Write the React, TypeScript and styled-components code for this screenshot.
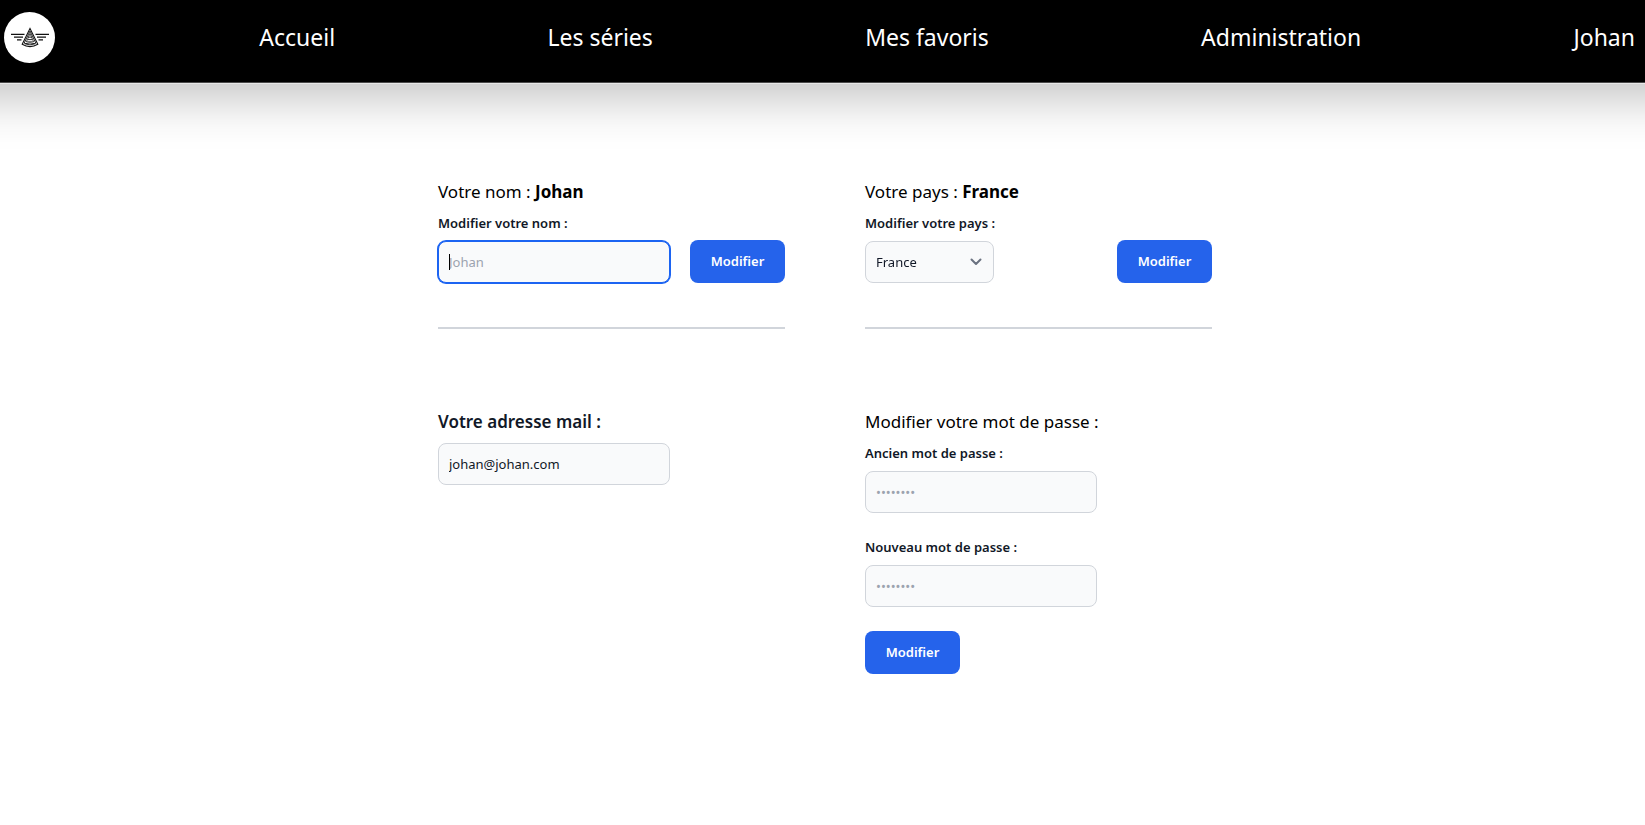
import React from "react";
import styled, { createGlobalStyle, css } from "styled-components";

const GlobalStyle = createGlobalStyle`
  *, *::before, *::after { box-sizing: border-box; }
  body {
    margin: 0;
    background: #fff;
    color: #000;
    font-family: "Noto Sans", sans-serif;
    overflow-x: hidden;
  }
  button, input, select { font-family: inherit; margin: 0; }
`;

const Header = styled.nav`
  position: relative;
  z-index: 0;
  display: flex;
  justify-content: space-between;
  align-items: flex-start;
  height: 83px;
  padding: 12px 2px 0 4px;
  background: #000;
  border-bottom: 1px solid #4b4b4b;
  box-shadow: 0 1px 0 #e8e8e8;
  /* Wider than the bar, so that its shadow stays even up to the window edges */
  &::before {
    content: "";
    position: absolute;
    inset: 0 -80px -2px;
    z-index: -1;
    box-shadow: 0 25px 50px -12px rgba(0, 0, 0, 0.25);
    pointer-events: none;
  }
`;

const LogoLink = styled.a`
  display: block;
  width: 51px;
  height: 51px;
`;

const NavLink = styled.a`
  padding: 9px 8px;
  color: #fff;
  font-size: 23px;
  line-height: 32px;
  text-decoration: none;
`;

const Main = styled.main`
  display: flex;
  justify-content: center;
  padding: 95px 0 40px 5px;
`;

const Grid = styled.div`
  display: grid;
  grid-template-columns: repeat(2, minmax(0, 1fr));
  column-gap: 80px;
  row-gap: 79px;
  width: 100%;
  max-width: 774px;
`;

const Section = styled.section<{ $divided?: boolean }>`
  ${(p) =>
    p.$divided &&
    css`
      padding-bottom: 44px;
      border-bottom: 2px solid #d1d5db;
    `}
`;

const titleText = css`
  margin: 0;
  font-size: 17px;
  line-height: 28px;
`;

const Title = styled.h2`
  ${titleText}
  padding-bottom: 7px;
  font-weight: 400;
`;

const MailLabel = styled.label`
  ${titleText}
  display: block;
  margin-bottom: 7px;
  color: #111827;
  font-weight: 600;
`;

const Label = styled.label`
  display: block;
  margin-bottom: 8px;
  color: #111827;
  font-size: 13px;
  font-weight: 600;
  line-height: 20px;
`;

const Row = styled.div`
  display: flex;
  justify-content: space-between;
  align-items: flex-end;
  height: 42px;
`;

const Field = styled.div`
  margin-bottom: 24px;
`;

const control = css`
  display: block;
  height: 42px;
  padding: 0 10px;
  border: 1px solid #d1d5db;
  border-radius: 8px;
  background: #f9fafb;
  color: #111827;
  font-size: 13px;
  line-height: 20px;
  outline: none;
`;

const Input = styled.input`
  ${control}
  width: 232px;
  &::placeholder { color: #9ca3af; opacity: 1; }
  &:focus {
    border-color: #1c64f2;
    box-shadow: 0 0 0 1px #1c64f2;
    caret-color: transparent;
  }
`;

const CaretBox = styled.div`
  position: relative;
  &:focus-within::after {
    content: "";
    position: absolute;
    left: 11px;
    top: 13px;
    width: 1px;
    height: 16px;
    background: #000;
  }
`;

const SelectBox = styled.div`
  position: relative;
  width: 129px;
  svg {
    position: absolute;
    right: 12px;
    top: 15px;
    pointer-events: none;
  }
`;

const Select = styled.select`
  ${control}
  width: 100%;
  appearance: none;
`;

const Button = styled.button`
  width: 95px;
  height: 43px;
  padding: 0 0 2px;
  border: 0;
  border-radius: 8px;
  background: #2563eb;
  color: #fff;
  font-size: 13px;
  font-weight: 600;
  line-height: 20px;
  cursor: pointer;
`;

const Logo = () => (
  <svg width="51" height="51" viewBox="0 0 51 51" aria-hidden="true">
    <circle cx="25.5" cy="25.5" r="25.5" fill="#fff" />
    <g fill="none" stroke="#111">
      <path d="M7 22.4H20.5M31.5 22.4H45M10 25.1H19M33 25.1H42M13 27.8H17.5M34.5 27.8H39" strokeWidth="1.3" />
      <path d="M26 16.5L18.2 32.2Q26 37 33.8 32.2Z" strokeWidth="1.1" />
      <path d="M26 19L20.2 31.2Q26 34.4 31.8 31.2Z" strokeWidth="0.9" />
      <path d="M26 21.5L22.4 29.8H29.6Z" strokeWidth="0.8" />
      <path d="M24.2 25.2H27.8M24 27.6H28M21 31.8Q26 30 31 31.8" strokeWidth="0.9" />
    </g>
  </svg>
);

const Chevron = () => (
  <svg width="12" height="12" viewBox="0 0 12 12" fill="none" aria-hidden="true">
    <path d="M1.5 3.5L6 8L10.5 3.5" stroke="#6b7280" strokeWidth="2" strokeLinecap="round" strokeLinejoin="round" />
  </svg>
);

const links = ["Accueil", "Les séries", "Mes favoris", "Administration", "Johan"];

export default function App() {
  return (
    <>
      <GlobalStyle />
      <Header>
        <LogoLink href="#" aria-label="Logo"><Logo /></LogoLink>
        {links.map((l) => <NavLink key={l} href="#">{l}</NavLink>)}
      </Header>
      <Main>
        <Grid>
          <Section $divided>
            <Title>Votre nom : <b>Johan</b></Title>
            <Label htmlFor="name">Modifier votre nom :</Label>
            <Row>
              <CaretBox><Input id="name" type="text" placeholder="Johan" autoFocus /></CaretBox>
              <Button type="button">Modifier</Button>
            </Row>
          </Section>
          <Section $divided>
            <Title>Votre pays : <b>France</b></Title>
            <Label htmlFor="country">Modifier votre pays :</Label>
            <Row>
              <SelectBox>
                <Select id="country" defaultValue="France"><option>France</option></Select>
                <Chevron />
              </SelectBox>
              <Button type="button">Modifier</Button>
            </Row>
          </Section>
          <Section>
            <MailLabel htmlFor="mail">Votre adresse mail :</MailLabel>
            <Input id="mail" type="email" defaultValue="johan@johan.com" />
          </Section>
          <Section>
            <Title>Modifier votre mot de passe :</Title>
            <Field>
              <Label htmlFor="old">Ancien mot de passe :</Label>
              <Input id="old" type="password" placeholder="••••••••" />
            </Field>
            <Field>
              <Label htmlFor="new">Nouveau mot de passe :</Label>
              <Input id="new" type="password" placeholder="••••••••" />
            </Field>
            <Button type="button">Modifier</Button>
          </Section>
        </Grid>
      </Main>
    </>
  );
}
